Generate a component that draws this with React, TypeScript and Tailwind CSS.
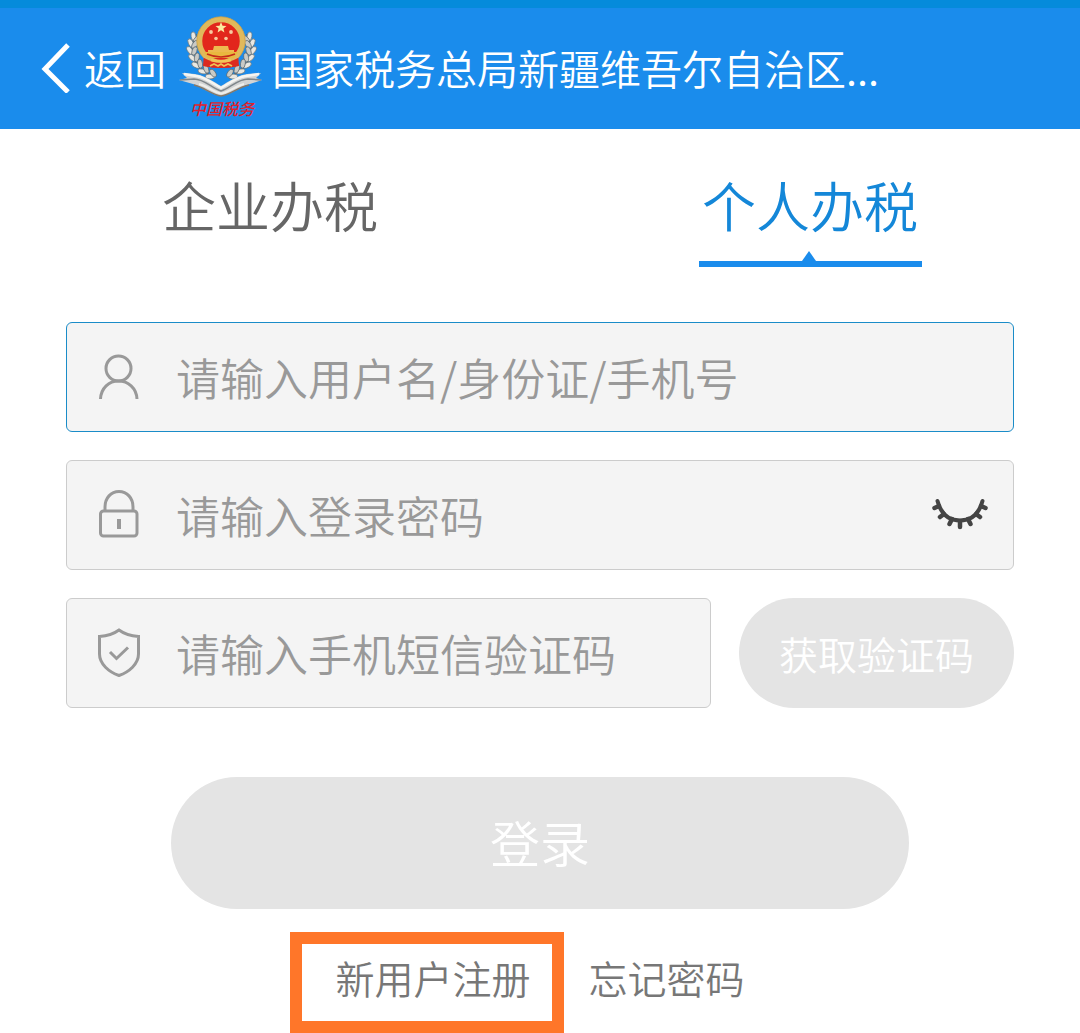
import { useState } from "react";

const tabs = [
  { id: "company", label: "企业办税" },
  { id: "person", label: "个人办税" },
];

// feuilles de blé du côté gauche, reprises en miroir à droite
const leaves = [
  { x: 26, y: 27, r: 20 },
  { x: 23, y: 33, r: 5 },
  { x: 22, y: 40, r: -8 },
  { x: 24, y: 47, r: -20 },
  { x: 27, y: 54, r: -35 },
  { x: 33, y: 60, r: -48 },
  { x: 40, y: 65, r: -62 },
];

function Branch() {
  return (
    <g>
      <path d="M26 25C17 40 22 57 44 69" fill="none" stroke="#4f5f68" strokeWidth="2" />
      {leaves.map((l) => (
        <g key={l.y} transform={`translate(${l.x} ${l.y}) rotate(${l.r})`}>
          <ellipse cx="-2.500" cy="0" rx="2.400" ry="4.500" transform="rotate(-28)" fill="#e9e8e2" stroke="#66747b" strokeWidth="0.7" />
          <ellipse cx="3" cy="1" rx="2.400" ry="4.500" transform="rotate(28)" fill="#c9cac6" stroke="#59666d" strokeWidth="0.7" />
        </g>
      ))}
    </g>
  );
}

function Emblem() {
  return (
    <svg width="100" height="116" viewBox="0 0 100 116" className="shrink-0" role="img" aria-label="中国税务">
      <Branch />
      <g transform="translate(103 0) scale(-1 1)">
        <Branch />
      </g>
      <path d="M34 44L68 44L69 57Q51 61 33 57Z" fill="#dc2a20" />
      <circle cx="51" cy="32" r="21.5" fill="#e2261c" stroke="#e0b95c" strokeWidth="5.500" />
      <circle cx="51" cy="32" r="24.2" fill="none" stroke="#c9a04a" strokeWidth="0.8" />
      <path d="M51 13l1.5 3.700 4 .2-3.100 2.600 1 3.900-3.400-2.200-3.400 2.200 1-3.900-3.100-2.600 4-.2z" fill="#fbe9a0" />
      <g fill="#f8c9a0">
        <circle cx="41" cy="23" r="1.9" />
        <circle cx="61" cy="23" r="1.9" />
        <circle cx="46" cy="29.5" r="1.8" />
        <circle cx="56" cy="29.5" r="1.8" />
      </g>
      <path d="M44 37h14l1 4h5v4H38v-4h5z" fill="#edb94f" />
      <path d="M34 43h34l-4 6H38z" fill="#e9b83f" />
      <path d="M37 45q14 6 28 0" fill="none" stroke="#c42a1b" strokeWidth="1.5" />
      <path d="M34 49q17 9 34 0v8q-17 4-34 0z" fill="#dc2a20" />
      <path d="M41 51q10 3 20 0" fill="none" stroke="#f0c659" strokeWidth="2.5" />
      <path d="M40 57l4-2 4 2 3-2 3 2 4-2 4 2" fill="none" stroke="#edc257" strokeWidth="1.8" />
      {/* ruban */}
      <path d="M12 64L25 65C34 66 44 73 51 77C58 73 68 66 77 65L91 64 86 69 92 71 80 75C72 77 60 86 51 87C42 86 30 77 23 75L9 71 17 69Z" fill="#d3d4d4" />
      <path d="M10 71L24 70C34 70 42 79 51 82C60 79 68 70 78 70L91 71" fill="none" stroke="#7f868a" strokeWidth="1.5" />
      <path d="M24 76C34 78 42 86 51 87C60 86 68 78 79 76" fill="none" stroke="#85796a" strokeWidth="1.5" />
      <path d="M14 65L26 67C35 68 44 75 51 79C58 75 67 68 76 67L89 65" fill="none" stroke="#f5f5f2" strokeWidth="2.5" />
      <path d="M29 75C38 77 44 84 51 84.500C58 84 65 77 74 75" fill="none" stroke="#efefec" strokeWidth="2" />
      <text x="52" y="106" textAnchor="middle" fontSize="16" fontWeight="500" fontStyle="italic" fill="#e01f2b" fontFamily="'Noto Sans CJK SC', sans-serif">
        中国税务
      </text>
    </svg>
  );
}

function UserIcon() {
  return (
    <svg width="48" height="52" viewBox="0 0 48 52" fill="none" stroke="#999" strokeWidth="3" className="shrink-0">
      <circle cx="23.5" cy="17.5" r="12.5" />
      <path d="M5.500 48C6 37 14 30 23.500 30S41.500 37 42 48" />
    </svg>
  );
}

function LockIcon() {
  return (
    <svg width="48" height="52" viewBox="0 0 48 52" fill="none" stroke="#999" strokeWidth="3" className="shrink-0">
      <rect x="5.5" y="22" width="36.500" height="25" rx="3" />
      <path d="M10 22V18C10 9 16 2.500 24 2.500S38 9 38 18V22" />
      <path d="M24 30V40" strokeWidth="4" />
    </svg>
  );
}

function ShieldIcon() {
  return (
    <svg width="48" height="52" viewBox="0 0 48 52" fill="none" stroke="#999" strokeWidth="3" className="shrink-0">
      <path d="M24 3C18 7.500 11 9 4.500 9.500V27C4.500 37 14 45 24 48.500C34 45 43.500 37 43.500 27V9.500C37 9 30 7.500 24 3Z" />
      <path d="M15 25L21.500 31.500 33 20.500" />
    </svg>
  );
}

function ClosedEye() {
  return (
    <svg width="60" height="36" viewBox="0 0 60 36" fill="none" stroke="#444" strokeWidth="4" strokeLinecap="round">
      <path d="M8.500 4C12 17 20 23.500 31 23.500S50 17 53.500 4" />
      <path d="M10 9L5.500 11M15 17L11 20M23 22L20.500 27M31 24V30M39 22L41.500 27M47 17L51 20M52 9L56.500 11" strokeWidth="4.500" />
    </svg>
  );
}

export default function App() {
  const [tab, setTab] = useState("person");
  const [user, setUser] = useState("");
  const [password, setPassword] = useState("");
  const [code, setCode] = useState("");
  const [visible, setVisible] = useState(false);

  const fieldCls = "flex h-[110px] items-center rounded-md border bg-[#f4f4f4] pl-7 pr-6";
  const inputCls = "ml-[33px] min-w-0 flex-1 bg-transparent text-[44px] leading-[64px] text-[#333] placeholder-[#999] outline-none";

  return (
    <div className="min-h-screen bg-white font-[350] font-['Noto_Sans_CJK_SC',sans-serif]">
      <header className="flex h-[129px] items-center border-t-8 border-[#058bdb] bg-[#1a8cec] pl-10 text-[41px] leading-[60px] text-white">
        <button type="button" className="flex shrink-0 items-center gap-3 pb-1">
          <svg width="32" height="52" viewBox="0 0 32 52" fill="none" stroke="currentColor" strokeWidth="5">
            <path d="M28 4L5 28 28 51" />
          </svg>
          返回
        </button>
        <span className="mr-0.5 ml-1 flex pb-1">
          <Emblem />
        </span>
        <h1 className="truncate pb-1">国家税务总局新疆维吾尔自治区...</h1>
      </header>

      <nav className="grid grid-cols-2 pt-9">
        {tabs.map((t) => (
          <div key={t.id} className="flex justify-center">
            <button
              type="button"
              onClick={() => setTab(t.id)}
              className={"flex flex-col items-center gap-1 text-[54px] leading-[80px] " + (tab === t.id ? "text-[#1487d8]" : "justify-start text-[#666]")}
            >
              {t.label}
              {tab === t.id && (
                <span className="flex w-[223px] flex-col items-center">
                  <svg width="18" height="12" viewBox="0 0 18 12" fill="#1a8cec">
                    <path d="M8 2L15 12H1Z" />
                  </svg>
                  <span className="h-[6px] w-full bg-[#1a8cec]"></span>
                </span>
              )}
            </button>
          </div>
        ))}
      </nav>

      <form onSubmit={(e) => e.preventDefault()} className="flex flex-col gap-7 px-[66px] pt-[55px]">
        <label className={fieldCls + " border-[#1a8cc8]"}>
          <UserIcon />
          <input
            type="text"
            aria-label="用户名"
            placeholder="请输入用户名/身份证/手机号"
            value={user}
            onChange={(e) => setUser(e.target.value)}
            className={inputCls}
          />
        </label>

        <div className={fieldCls + " border-[#ccc]"}>
          <LockIcon />
          <input
            type={visible ? "text" : "password"}
            aria-label="登录密码"
            placeholder="请输入登录密码"
            value={password}
            onChange={(e) => setPassword(e.target.value)}
            className={inputCls}
          />
          <button type="button" aria-label="显示密码" onClick={() => setVisible(!visible)} className="shrink-0">
            <ClosedEye />
          </button>
        </div>

        <div className="flex gap-7">
          <label className={fieldCls + " min-w-0 flex-1 border-[#ccc]"}>
            <ShieldIcon />
            <input
              type="text"
              aria-label="短信验证码"
              placeholder="请输入手机短信验证码"
              value={code}
              onChange={(e) => setCode(e.target.value)}
              className={inputCls}
            />
          </label>
          <button type="button" className="h-[110px] shrink-0 rounded-full bg-[#e4e4e4] px-10 text-[39px] leading-[56px] text-white">
            获取验证码
          </button>
        </div>

        <button type="submit" className="mx-[105px] mt-[41px] h-[132px] rounded-full bg-[#e4e4e4] pb-1 text-[50px] text-white">
          登录
        </button>
      </form>

      <div className="flex justify-center gap-[58px] pt-10 text-[39px] leading-[56px] text-[#777]">
        <a href="#register" className="relative">
          新用户注册
          <span className="absolute -top-[17px] -right-[33px] -bottom-[28px] -left-[45px] border-12 border-[#ff7629]"></span>
        </a>
        <a href="#forgot">忘记密码</a>
      </div>
    </div>
  );
}
